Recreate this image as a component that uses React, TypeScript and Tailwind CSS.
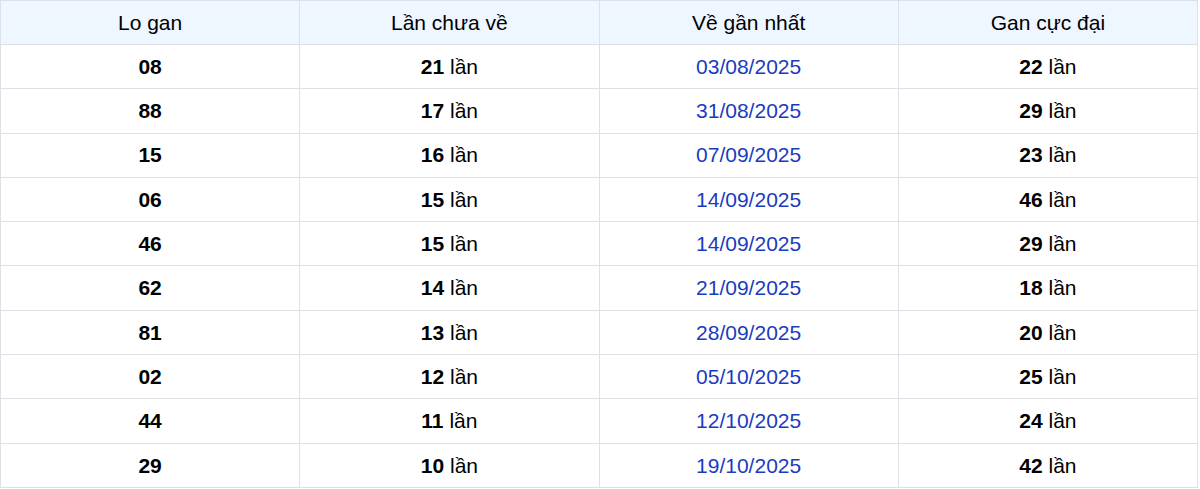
import React from "react";

const rows: [string, string, string, string][] = [
  ["08", "21", "03/08/2025", "22"],
  ["88", "17", "31/08/2025", "29"],
  ["15", "16", "07/09/2025", "23"],
  ["06", "15", "14/09/2025", "46"],
  ["46", "15", "14/09/2025", "29"],
  ["62", "14", "21/09/2025", "18"],
  ["81", "13", "28/09/2025", "20"],
  ["02", "12", "05/10/2025", "25"],
  ["44", "11", "12/10/2025", "24"],
  ["29", "10", "19/10/2025", "42"],
];

export default function App() {
  return (
    <div className="w-[1200px] bg-white" style={{ fontFamily: '"Liberation Sans", Arial, sans-serif' }}>
      <table className="w-[1198px] border-collapse table-fixed text-[21px] text-black">
        <thead>
          <tr className="h-[44px] bg-[#eef6ff]">
            {["Lo gan", "Lần chưa về", "Về gần nhất", "Gan cực đại"].map((h) => (
              <th key={h} className="border border-[#dde1e6] font-normal text-center p-0">
                {h}
              </th>
            ))}
          </tr>
        </thead>
        <tbody>
          {rows.map((r, i) => (
            <tr key={i} className="h-[44.3px]">
              <td className="border border-[#dde1e6] text-center font-bold p-0">{r[0]}</td>
              <td className="border border-[#dde1e6] text-center p-0">
                <span className="font-bold">{r[1]}</span> lần
              </td>
              <td className="border border-[#dde1e6] text-center p-0 text-[#1a3bbf]">{r[2]}</td>
              <td className="border border-[#dde1e6] text-center p-0">
                <span className="font-bold">{r[3]}</span> lần
              </td>
            </tr>
          ))}
        </tbody>
      </table>
    </div>
  );
}
